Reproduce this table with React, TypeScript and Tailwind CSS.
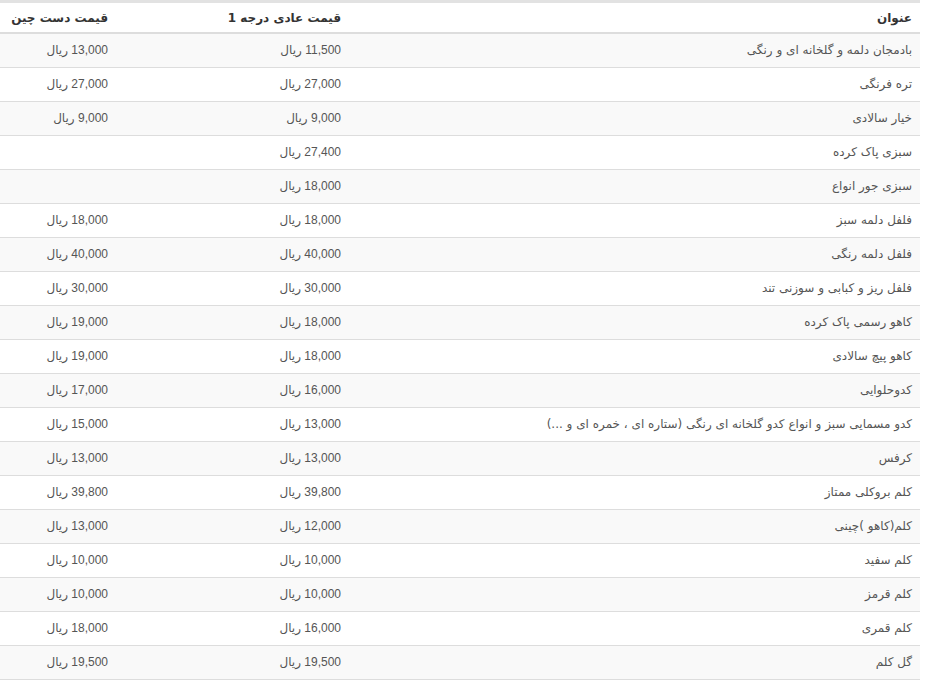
const rows: [string, string, string][] = [
  ["بادمجان دلمه و گلخانه ای و رنگی", "11,500 ریال", "13,000 ریال"],
  ["تره فرنگی", "27,000 ریال", "27,000 ریال"],
  ["خیار سالادی", "9,000 ریال", "9,000 ریال"],
  ["سبزی پاک کرده", "27,400 ریال", ""],
  ["سبزی جور انواع", "18,000 ریال", ""],
  ["فلفل دلمه سبز", "18,000 ریال", "18,000 ریال"],
  ["فلفل دلمه رنگی", "40,000 ریال", "40,000 ریال"],
  ["فلفل ریز و کبابی و سوزنی تند", "30,000 ریال", "30,000 ریال"],
  ["کاهو رسمی پاک کرده", "18,000 ریال", "19,000 ریال"],
  ["کاهو پیچ سالادی", "18,000 ریال", "19,000 ریال"],
  ["کدوحلوایی", "16,000 ریال", "17,000 ریال"],
  ["کدو مسمایی سبز و انواع کدو گلخانه ای رنگی (ستاره ای ، خمره ای و ...)", "13,000 ریال", "15,000 ریال"],
  ["کرفس", "13,000 ریال", "13,000 ریال"],
  ["کلم بروکلی ممتاز", "39,800 ریال", "39,800 ریال"],
  ["کلم(کاهو )چینی", "12,000 ریال", "13,000 ریال"],
  ["کلم سفید", "10,000 ریال", "10,000 ریال"],
  ["کلم قرمز", "10,000 ریال", "10,000 ریال"],
  ["کلم قمری", "16,000 ریال", "18,000 ریال"],
  ["گل کلم", "19,500 ریال", "19,500 ریال"],
];

export default function App() {
  return (
    <div className="w-[926px] h-[680px] bg-white overflow-hidden font-['DejaVu_Sans',sans-serif]">
      <div dir="rtl" className="w-[920px] border-t-[3px] border-[#e2e2e2]">
        <table className="w-full border-collapse text-[12px] text-[#555]">
          <thead>
            <tr className="h-[30px] border-b-2 border-[#ddd]">
              <th className="px-2 text-right font-bold text-[#333]">عنوان</th>
              <th className="w-[233px] px-2 text-right font-bold text-[#333] tracking-[-0.3px]">قیمت عادی درجه 1</th>
              <th className="w-[116px] px-2 text-right font-bold text-[#333] tracking-[-0.5px]">قیمت دست چین</th>
            </tr>
          </thead>
          <tbody>
            {rows.map((r, i) => (
              <tr
                key={i}
                className={`h-[34px] border-b border-[#ddd] ${i % 2 === 0 ? "bg-[#f9f9f9]" : "bg-white"}`}
              >
                <td className="px-2 text-right">{r[0]}</td>
                <td className="px-2 text-right font-['Liberation_Sans','DejaVu_Sans',sans-serif]">{r[1]}</td>
                <td className="px-2 text-right font-['Liberation_Sans','DejaVu_Sans',sans-serif]">{r[2]}</td>
              </tr>
            ))}
          </tbody>
        </table>
      </div>
    </div>
  );
}
